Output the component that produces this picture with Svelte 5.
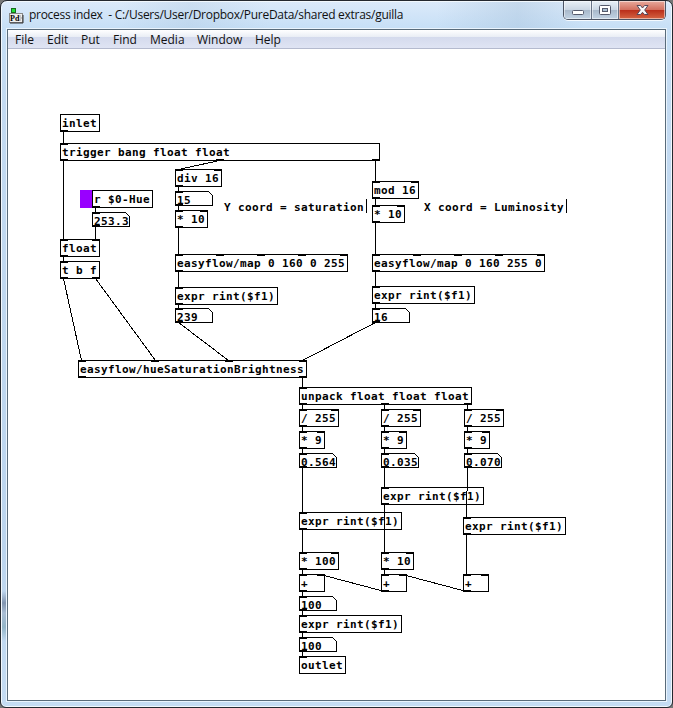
<script>
  const menus = [
    ['File', 18], ['Edit', 20], ['Put', 18], ['Find', 23],
    ['Media', 33], ['Window', 44], ['Help', 25]
  ];

  // [text, x, y, inlets, outlets, width override]
  const objects = [
    ['inlet', 60, 114, 0, 1],
    ['trigger bang float float', 60, 143, 1, 3, 319],
    ['div 16', 175, 169, 2, 1],
    ['* 10', 175, 210, 2, 1],
    ['r $0-Hue', 92, 190, 0, 1],
    ['float', 60, 239, 2, 1],
    ['t b f', 60, 261, 1, 2],
    ['mod 16', 372, 181, 2, 1],
    ['* 10', 372, 205, 2, 1],
    ['easyflow/map 0 160 0 255', 175, 254, 5, 1],
    ['easyflow/map 0 160 255 0', 372, 254, 5, 1],
    ['expr rint($f1)', 175, 287, 1, 1],
    ['expr rint($f1)', 372, 286, 1, 1],
    ['easyflow/hueSaturationBrightness', 78, 360, 4, 2],
    ['unpack float float float', 299, 387, 1, 3],
    ['/ 255', 299, 409, 2, 1],
    ['/ 255', 381, 409, 2, 1],
    ['/ 255', 464, 409, 2, 1],
    ['* 9', 299, 431, 2, 1],
    ['* 9', 381, 431, 2, 1],
    ['* 9', 464, 431, 2, 1],
    ['expr rint($f1)', 381, 487, 1, 1],
    ['expr rint($f1)', 299, 512, 1, 1],
    ['expr rint($f1)', 463, 517, 1, 1],
    ['* 100', 299, 552, 2, 1],
    ['* 10', 381, 552, 2, 1],
    ['+', 299, 574, 2, 1, 25],
    ['+', 381, 574, 2, 1, 25],
    ['+', 463, 574, 2, 1, 25],
    ['expr rint($f1)', 299, 615, 1, 1],
    ['outlet', 299, 656, 1, 0]
  ].map(([text, x, y, ins, outs, w]) => ({ text, x, y, ins, outs, w: w ?? text.length * 7 + 4, h: 17 }));

  const numbers = [
    ['15', 175, 191], ['253.3', 92, 212], ['239', 175, 308], ['16', 372, 308],
    ['0.564', 299, 453], ['0.035', 381, 453], ['0.070', 464, 453],
    ['100', 299, 596], ['100', 299, 637]
  ].map(([text, x, y]) => ({ text, x, y, ins: 1, outs: 1, w: 37, h: 14, num: true }));

  const nodes = [...objects, ...numbers];

  const comments = [
    ['Y coord = saturation', 224, 366],
    ['X coord = Luminosity', 424, 566]
  ];

  const wires = [
    [63, 131, 63, 143], [63, 160, 63, 239], [219, 160, 178, 169], [375, 160, 375, 181],
    [178, 186, 178, 191], [178, 205, 178, 210], [178, 227, 178, 254], [178, 271, 178, 287], [178, 304, 178, 308],
    [95, 207, 95, 212], [95, 226, 95, 239], [63, 256, 63, 261],
    [375, 198, 375, 205], [375, 222, 375, 254], [375, 271, 375, 286], [375, 303, 375, 308],
    [63, 278, 81, 360], [95, 278, 155, 360], [178, 322, 228, 360], [375, 322, 302, 360],
    [302, 377, 302, 387],
    [302, 404, 302, 409], [384, 404, 384, 409], [467, 404, 467, 409],
    [302, 426, 302, 431], [384, 426, 384, 431], [467, 426, 467, 431],
    [302, 448, 302, 453], [384, 448, 384, 453], [467, 448, 467, 453],
    [302, 467, 302, 512], [384, 467, 384, 487], [467, 467, 466, 517],
    [302, 529, 302, 552], [384, 504, 384, 552], [466, 534, 466, 574],
    [302, 569, 302, 574], [384, 569, 384, 574],
    [384, 591, 320, 574], [466, 591, 402, 574],
    [302, 591, 302, 596], [302, 610, 302, 615], [302, 632, 302, 637], [302, 651, 302, 656]
  ];

  function slots(count, n) {
    return Array.from({ length: count }, (_, i) =>
      n.x + (count > 1 ? Math.floor(((n.w - 7) * i) / (count - 1)) : 0));
  }
  function outline(n) {
    const cut = n.num ? 4 : 0;
    const l = n.x + 0.5, t = n.y + 0.5, r = l + n.w, b = t + n.h;
    return `M${l} ${t}H${r - cut}L${r} ${t + cut}V${b}H${l}Z`;
  }
</script>

<div class="desktop">
  <div class="window">
    <header>
      <svg class="logo" width="16" height="16" viewBox="0 0 16 16">
        <rect x="2" y="0" width="5" height="5" fill="#176b1c" />
        <rect x="3" y="1" width="3" height="3" fill="#20df35" />
        <path d="M6 5h3v2H6z" fill="#555" />
        <rect x="0.5" y="5.5" width="13" height="9" fill="#eee" stroke="#888" />
        <path d="M1 15h13V7" fill="none" stroke="#333" />
        <text x="1" y="13" class="pd">Pd</text>
        <path d="M10 8h2M11 10h2M10 12h2" stroke="#999" />
      </svg>
      <h1>process index&nbsp; - C:/Users/User/Dropbox/PureData/shared extras/guilla</h1>
      <div class="controls">
        <span class="min"><svg width="12" height="5"><rect x=".5" y=".5" width="11" height="4" rx="1" fill="#fff" stroke="#555a6c" /></svg></span>
        <span class="max"><svg width="12" height="10"><rect x=".5" y=".5" width="11" height="9" rx="1" fill="#fff" stroke="#555a6c" /><rect x="3.5" y="3.5" width="5" height="3" fill="#a9bfd2" stroke="#555a6c" /></svg></span>
        <span class="close"><svg width="13" height="11" viewBox="0 0 13 11"><path d="M1 .5H4.5L6.5 3 8.5.5H12L8.7 5 12 9.5H8.5L6.5 7.3 4.5 9.5H1L4.3 5Z" fill="#f8f8f8" stroke="#56485a" /></svg></span>
      </div>
    </header>
    <main>
      <nav>
        {#each menus as [label, width]}
          <span style:width="{width}px">{label}</span>
        {/each}
      </nav>
      <svg class="patch" width="657" height="651" viewBox="8 49 657 651">
        <rect x="80" y="190" width="12" height="18" fill="#9900ff" />
        {#each nodes as n}
          <path class="box" d={outline(n)} />
          {#each slots(n.ins, n) as x}
            <rect {x} y={n.y} width="8" height="2" />
          {/each}
          {#each slots(n.outs, n) as x}
            <rect {x} y={n.y + n.h - 1} width="8" height="2" />
          {/each}
          <text x={n.x + 2} y={n.y + 13}>{n.text}</text>
        {/each}
        {#each comments as [text, x, caret]}
          <text {x} y="211">{text}</text>
          <rect x={caret} y="199" width="1" height="14" />
        {/each}
        {#each wires as [x1, y1, x2, y2]}
          <line x1={x1 + 0.5} y1={y1 + 0.5} x2={x2 + 0.5} y2={y2 + 0.5} />
        {/each}
      </svg>
    </main>
  </div>
</div>

<style>
  .desktop {
    width: 673px;
    height: 708px;
    background: #777;
    overflow: hidden;
  }
  .window {
    box-sizing: border-box;
    width: 673px;
    height: 708px;
    display: flex;
    flex-direction: column;
    border: 1px solid #24282f;
    border-radius: 7px 7px 6px 6px;
    box-shadow: inset 0 0 0 1px #f2f8fd;
    padding: 0 6px;
    background:
      linear-gradient(90deg, transparent 18%, #a5c0d944 28%, transparent 40%, transparent 65%, #a5c0d966 77%, transparent 87%) 0 0 / 100% 28px no-repeat,
      linear-gradient(transparent 590px, #8195b0 602px, #a9bdd4 612px, #93b5c8 626px, transparent 640px) 0 0 / 6px 100% no-repeat,
      linear-gradient(#dceafa, #c6dff6 28px, #c3daf1 100px, #bcd5ee 550px, #c5dcf3);
  }
  header {
    height: 28px;
    flex: none;
    display: flex;
    align-items: flex-start;
  }
  .logo { margin: 7px 0 0 2px; }
  .patch .pd, .pd { font: bold 8px "Liberation Serif", serif; }
  h1 {
    margin: 5px 0 0 4px;
    font: 12px/18px "Open Sans", sans-serif;
    letter-spacing: -0.28px;
    color: #111;
    white-space: pre;
    flex: 1;
  }
  .controls {
    display: flex;
    height: 18px;
    border: 1px solid #4c5464;
    border-top: 0;
    border-radius: 0 0 5px 5px;
    overflow: hidden;
    box-shadow: 0 1px 0 #f5faff;
    margin-right: 0;
  }
  .controls span {
    display: flex;
    align-items: center;
    justify-content: center;
    box-shadow: inset 0 0 0 1px #ffffff80;
  }
  .min, .max {
    width: 27px;
    border-right: 1px solid #677386;
    background: linear-gradient(#e9f0f7, #cbd7e4 48%, #a8b8ca 50%, #c2d3e4);
  }
  .min { padding-top: 5px; box-sizing: border-box; height: 18px; width: 28px; }
  .max { width: 26px; }
  .close {
    width: 46px;
    background: linear-gradient(#e8aa9d, #d3705f 48%, #b92d19 50%, #d56543);
  }
  main {
    flex: none;
    width: 657px;
    border: 1px solid #596b7a;
    box-shadow: 0 0 0 1px #eaf4fd;
    background: #fff;
  }
  nav {
    box-sizing: border-box;
    height: 19px;
    display: flex;
    gap: 14px;
    padding-left: 7px;
    border-bottom: 1px solid #b4bace;
    background: linear-gradient(#fff, #e9edf5 7px, #d4daed 7px, #dfe4f3);
    font: 12px/20px "Open Sans", sans-serif;
    color: #111;
  }
  nav span { white-space: nowrap; }
  .patch { display: block; shape-rendering: crispEdges; }
  .patch text {
    font: bold 11px "DejaVu Sans Mono", monospace;
    letter-spacing: 0.378px;
    white-space: pre;
  }
  .box { fill: none; stroke: #000; }
  line { stroke: #000; }
</style>
